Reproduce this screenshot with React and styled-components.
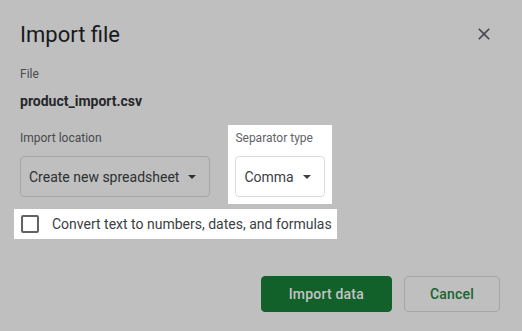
import React from 'react';
import styled, { createGlobalStyle } from 'styled-components';

const GlobalStyle = createGlobalStyle`
  html, body {
    margin: 0;
    padding: 0;
    background: #bfbfbf;
  }
  * { box-sizing: border-box; }
`;

const Dialog = styled.div`
  width: 522px;
  height: 331px;
  background: #bfbfbf;
  font-family: Roboto, "Liberation Sans", sans-serif;
  display: flex;
  flex-direction: column;
  padding: 21px 0 0 20px;
  overflow: hidden;
`;

const Header = styled.div`
  display: flex;
  align-items: center;
  justify-content: space-between;
  padding-right: 28px;
`;

const Title = styled.h1`
  margin: 0;
  font-size: 22px;
  line-height: 28px;
  font-weight: 400;
  color: #18191b;
`;

const CloseButton = styled.button`
  border: none;
  background: none;
  padding: 0;
  width: 20px;
  height: 20px;
  margin-bottom: 3px;
  display: flex;
  color: #474a4e;
  cursor: pointer;
`;

const Label = styled.div`
  font-size: 12px;
  line-height: 16px;
  color: ${p => (p.$lit ? '#5f6368' : '#474a4e')};
  margin-top: ${p => p.$top || 0}px;
`;

const FileName = styled.div`
  margin-top: 9px;
  font-size: 14px;
  line-height: 20px;
  font-weight: 700;
  color: #26282a;
`;

const Row = styled.div`
  display: flex;
  align-items: flex-start;
  gap: 18px;
  margin-top: 14px;
`;

const Field = styled.div`
  display: flex;
  flex-direction: column;
  gap: 10px;
  padding: 5px 0 7px;
`;

const Highlight = styled(Field)`
  background: #fff;
  padding: 5px 7px 7px;
`;

const Select = styled.div`
  height: 41px;
  display: flex;
  align-items: center;
  gap: 9px;
  padding: 0 13px 0 8px;
  border: 1px solid ${p => (p.$lit ? '#dadce0' : '#a5a6a8')};
  border-radius: 4px;
  font-size: 14px;
  color: ${p => (p.$lit ? '#3c4043' : '#2d3032')};
  background: ${p => (p.$lit ? '#fff' : 'transparent')};
`;

const CheckRow = styled.label`
  margin: 5px 0 0 -6px;
  align-self: flex-start;
  height: 30px;
  display: flex;
  align-items: center;
  gap: 13px;
  padding: 0 5px 0 7px;
  background: #fff;
  font-size: 14px;
  color: #3c4043;
`;

const CheckBox = styled.span`
  width: 18px;
  height: 18px;
  border: 2px solid #5f6368;
  border-radius: 2px;
`;

const Footer = styled.div`
  display: flex;
  justify-content: flex-end;
  gap: 12px;
  padding-right: 22px;
  margin-top: 37px;
`;

const Button = styled.button`
  height: 36px;
  padding: 0 ${p => (p.$primary ? 27 : 25)}px;
  border-radius: 4px;
  font-family: Roboto, "Liberation Sans", sans-serif;
  font-size: 14px;
  font-weight: 500;
  letter-spacing: 0.2px;
  border: 1px solid ${p => (p.$primary ? '#12602a' : '#a5a6a8')};
  background: ${p => (p.$primary ? '#12602a' : 'transparent')};
  color: ${p => (p.$primary ? '#c4c4c4' : '#1a6330')};
  cursor: pointer;
`;

const Caret = ({ color }) => (
  <svg width="8" height="4" viewBox="0 0 10 5">
    <path d="M0 0l5 5 5-5z" fill={color} />
  </svg>
);

export default function App() {
  return (
    <>
      <GlobalStyle />
      <Dialog>
        <Header>
          <Title>Import file</Title>
          <CloseButton aria-label="Close">
            <svg width="20" height="20" viewBox="0 0 24 24">
              <path
                fill="currentColor"
                d="M19 6.41L17.59 5 12 10.59 6.41 5 5 6.41 10.59 12 5 17.59 6.41 19 12 13.41 17.59 19 19 17.59 13.41 12z"
              />
            </svg>
          </CloseButton>
        </Header>

        <Label $top={17}>File</Label>
        <FileName>product_import.csv</FileName>

        <Row>
          <Field>
            <Label>Import location</Label>
            <Select>
              Create new spreadsheet
              <Caret color="#2d3032" />
            </Select>
          </Field>
          <Highlight>
            <Label $lit>Separator type</Label>
            <Select $lit>
              Comma
              <Caret color="#3c4043" />
            </Select>
          </Highlight>
        </Row>

        <CheckRow>
          <CheckBox />
          Convert text to numbers, dates, and formulas
        </CheckRow>

        <Footer>
          <Button $primary>Import data</Button>
          <Button>Cancel</Button>
        </Footer>
      </Dialog>
    </>
  );
}
